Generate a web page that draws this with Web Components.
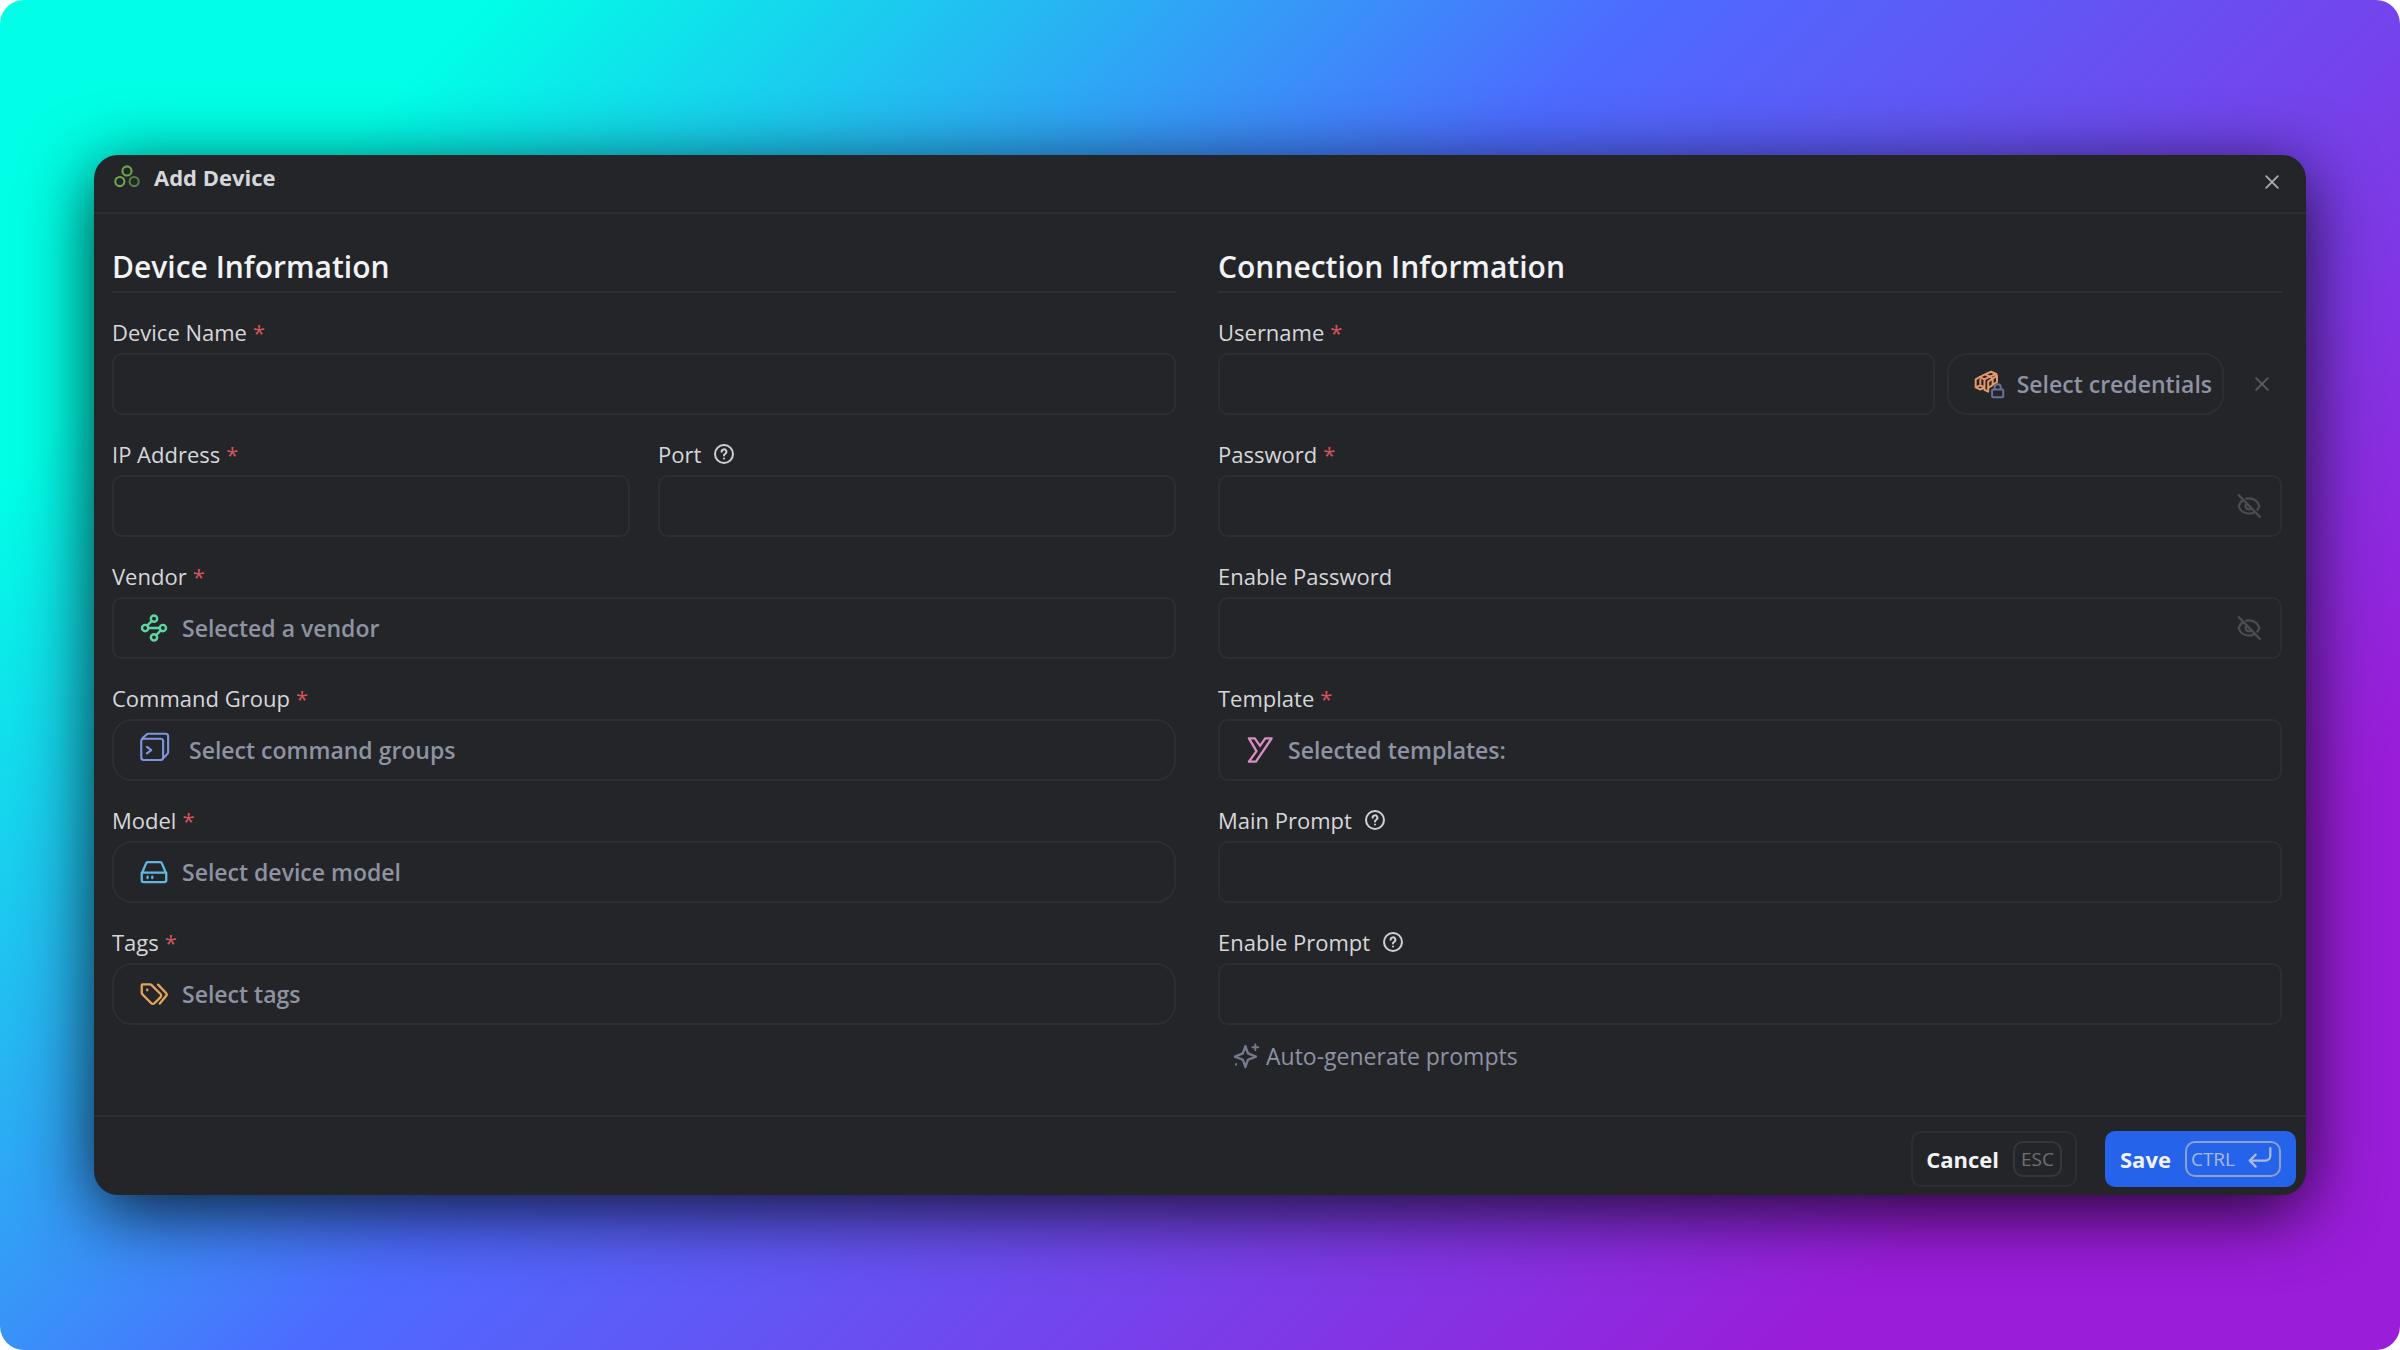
<!DOCTYPE html>
<html lang="en">
<head>
<meta charset="utf-8">
<title>Add Device</title>
<style>
  html { background: #fff; }
  body {
    margin: 0;
    font-family: 'Open Sans', 'Noto Sans', sans-serif;
    font-size: 22px;
    line-height: 30px;
    color: #d6d7da;
    --panel: #242529;
    --line: #2d2e32;
    --muted: #8d93a1;
  }
</style>
</head>
<body>

<app-stage>
  <app-dialog heading="Add Device">
    <form-section heading="Device Information">
      <text-field label="Device Name" required></text-field>
      <field-pair>
        <text-field label="IP Address" required></text-field>
        <text-field label="Port" help></text-field>
      </field-pair>
      <picker-field label="Vendor" icon="vendor" text="Selected a vendor" required></picker-field>
      <picker-field label="Command Group" icon="commands" text="Select command groups" round required></picker-field>
      <picker-field label="Model" icon="drive" text="Select device model" round required></picker-field>
      <picker-field label="Tags" icon="tags" text="Select tags" round required></picker-field>
    </form-section>
    <form-section heading="Connection Information">
      <text-field label="Username" required>
        <credentials-button slot="after"></credentials-button>
      </text-field>
      <text-field label="Password" type="password" required></text-field>
      <text-field label="Enable Password" type="password"></text-field>
      <picker-field label="Template" icon="template" text="Selected templates:" required></picker-field>
      <text-field label="Main Prompt" help></text-field>
      <text-field label="Enable Prompt" help></text-field>
      <generate-button slot="end">Auto-generate prompts</generate-button>
    </form-section>
    <action-button slot="footer" keys="ESC">Cancel</action-button>
    <action-button slot="footer" keys="CTRL" enter primary>Save</action-button>
  </app-dialog>
</app-stage>

<script>
  const svg = (size, stroke, body, color = 'currentColor') =>
    `<svg width="${size}" height="${size}" viewBox="0 0 24 24" fill="none" stroke="${color}" stroke-width="${stroke}" stroke-linecap="round" stroke-linejoin="round" aria-hidden="true">${body}</svg>`;

  const icons = {
    logo: svg(26, 1.9, '<circle cx="12" cy="6.4" r="4.2"/><circle cx="5.4" cy="16.2" r="4.2"/><circle cx="18.6" cy="16.2" r="4.2" opacity=".7"/>', '#6aa84f'),
    close: svg(20, 2.2, '<path d="M5 5l14 14M19 5L5 19"/>'),
    help: svg(22, 2.2, '<circle cx="12" cy="12" r="9.8"/><path d="M9.4 9.6a2.6 2.6 0 1 1 3.9 2.2c-.8.4-1.3.9-1.3 1.8M12 16.8v.2"/>'),
    vendor: svg(28, 2.1, '<circle cx="12" cy="4" r="2.7"/><circle cx="4.4" cy="12" r="2.7"/><circle cx="19.6" cy="12" r="2.7"/><circle cx="12" cy="20" r="2.7"/><path d="M7.1 12h9.8M6.2 10l4-4.2M13.8 18.2l4-4.2"/>', '#5fd6a2'),
    // wider than the others, so its text starts further in
    commands: `<svg width="35" height="30" viewBox="0 3 28 24" fill="none" stroke="#7b97dd" stroke-width="1.7" stroke-linecap="round" stroke-linejoin="round" overflow="visible" aria-hidden="true"><rect x="1" y="6" width="17.5" height="17" rx="2"/><path d="M2 5.6L5.2 2.6A2 2 0 0 1 6.6 2H20.5a2 2 0 0 1 2 2v12.6a2 2 0 0 1-.5 1.4l-3 3.2M5.5 12.5l3.5 2.6-3.5 2.6"/></svg>`,
    drive: svg(28, 2, '<path d="M1.5 13.5L5.2 4.6A1.6 1.6 0 0 1 6.7 3.5h10.6a1.6 1.6 0 0 1 1.5 1.1l3.7 8.9v5.6a1.6 1.6 0 0 1-1.6 1.6H3.1a1.6 1.6 0 0 1-1.6-1.6zM1.5 12.5h21M6.5 16v1.2M10.5 16v1.2"/>', '#62b7df'),
    tags: svg(28, 2, '<path d="M1.5 4.4v6.4c0 .6.2 1.1.6 1.5l7.6 7.6a1.9 1.9 0 0 0 2.7 0l5.2-5.2a1.9 1.9 0 0 0 0-2.7L10 4.4a2 2 0 0 0-1.5-.7H2.2a.7.7 0 0 0-.7.7zM6.2 8.2v.6M15.5 4l6.8 7.2a1.9 1.9 0 0 1 0 2.6L17 20.2"/>', '#e2a35c'),
    template: svg(28, 2, '<path d="M2.5 2h5l4.5 6.5L16.500 2h5.500L8.500 22h-6L9 13z"/>', '#d68fc0'),
    cubes: svg(32, 1.5, '<path stroke="#e5986c" d="M2 8.5l3-1.7 3.6 1.7v6L5.5 13 2 14.5zM2 8.5v6l3.3 1.6M8.6 8.5v7.8l2.8 1.4v-7.5M5 6.8l4-2 3.6 1.7-4 2M9 4.8l4.5-2 4 1.7-5 2M11.4 10.2l3.3-2.3v5l-3.3 2M14.7 7.9l3.3-2v4.6l-3.3 2.2M5.5 8.8V13M12.6 6.5l2.1 1.4M17.5 4.5l.5 1.4M5.3 16.1l3.3-1.4"/><g stroke="#6b7196"><rect x="14.3" y="16.2" width="8.4" height="5.8" rx=".8"/><path d="M16.2 16v-1.5a2.3 2.3 0 0 1 4.6 0V16"/></g>'),
    eyeOff: svg(26, 2.1, '<path d="M2.5 2l19.5 20M9.5 5.2A10.5 10.5 0 0 1 12 5c5 0 8.4 3.2 9.5 7-.4 1.3-1 2.4-1.8 3.4M6.3 6.7C4.4 8 3.1 9.9 2.5 12c1.1 3.8 4.5 7 9.5 7 1.6 0 3-.3 4.2-.9M9.8 9.8a3.1 3.1 0 0 0 4.4 4.4"/>'),
    sparkle: svg(28, 2, '<path d="M11.5 3.5l2.2 6.3 6.8 2.7-6.8 2.7-2.2 6.3-2.2-6.3-6.8-2.7 6.8-2.7z"/><path stroke-width="1.6" d="M20 2v5M17.5 4.5h5M3.5 18.8v.8"/>', '#747b8b'),
    enter: svg(26, 2.1, '<path d="M21.5 2v7a4.5 4.5 0 0 1-4.5 4.5H2.5M8 8l-5.5 5.5L8 19"/>')
  };

  // Sets the shadow markup once, from the class's own render()
  class BaseElement extends HTMLElement {
    constructor() {
      super();
      this.attachShadow({ mode: 'open' });
      this.shadowRoot.innerHTML = `<style>* { box-sizing: border-box; } svg { display: block; flex: none; }</style>${this.render()}`;
    }
    attr(name) {
      return this.getAttribute(name) || '';
    }
  }

  const labelStyles = `
    :host { display: block; min-width: 0; }
    .label { display: flex; align-items: center; gap: 6px; height: 30px; margin-bottom: 6px; }
    .star { color: #d4565a; }
    .help { background: none; border: 0; padding: 0; margin-left: 6px; color: #cfd0d4; }
  `;

  const labelRow = (el, id) => `
    <div class="label">
      <label for="${id}">${el.attr('label')}</label>
      ${el.hasAttribute('required') ? '<span class="star">*</span>' : ''}
      ${el.hasAttribute('help') ? `<button class="help" type="button" aria-label="Help">${icons.help}</button>` : ''}
    </div>`;

  customElements.define('app-stage', class extends BaseElement {
    render() {
      return /*html*/ `
      <style>
        :host {
          display: flex;
          align-items: center;
          box-sizing: border-box;
          min-height: 100vh;
          padding: 80px 94px;
          border-radius: 24px;
          background: linear-gradient(135deg, #00ffe6 13%, #4d6bff 44%, #9a1dd9 84%);
        }
        ::slotted(*) { flex: 1; }
      </style>
      <slot></slot>`;
    }
  });

  customElements.define('app-dialog', class extends BaseElement {
    render() {
      return /*html*/ `
      <style>
        :host {
          display: block;
          min-width: 0;
          border-radius: 24px;
          background: var(--panel);
          box-shadow: 0 16px 70px rgba(0, 0, 0, 0.8);
        }
        header {
          display: flex;
          align-items: center;
          justify-content: space-between;
          height: 59px;
          padding: 0 24px 0 20px;
          border-bottom: 2px solid var(--line);
        }
        h1 { display: flex; align-items: center; gap: 14px; margin: 0; padding-bottom: 14px; font-size: 22px; font-weight: 700; }
        header button { display: flex; padding: 0 0 4px; border: 0; background: none; color: #a9abb0; }
        main { display: grid; grid-template-columns: 1fr 1fr; gap: 42px; padding: 35px 24px 42px 18px; }
        footer {
          display: flex;
          justify-content: flex-end;
          gap: 28px;
          padding: 14px 10px 8px;
          border-top: 2px solid var(--line);
        }
      </style>
      <header>
        <h1>${icons.logo}${this.attr('heading')}</h1>
        <button type="button" aria-label="Close">${icons.close}</button>
      </header>
      <main><slot></slot></main>
      <footer><slot name="footer"></slot></footer>`;
    }
  });

  customElements.define('form-section', class extends BaseElement {
    render() {
      return /*html*/ `
      <style>
        :host { display: block; min-width: 0; }
        h2 {
          margin: 0 0 24px;
          padding-bottom: 6px;
          border-bottom: 2px solid var(--line);
          color: #f1f2f4;
          font-size: 30px;
          font-weight: 600;
          line-height: 36px;
        }
        .fields { display: grid; gap: 24px; }
      </style>
      <h2>${this.attr('heading')}</h2>
      <div class="fields"><slot></slot></div>
      <slot name="end"></slot>`;
    }
  });

  customElements.define('field-pair', class extends BaseElement {
    render() {
      return /*html*/ `
      <style>:host { display: grid; grid-template-columns: 1fr 1fr; gap: 28px; }</style>
      <slot></slot>`;
    }
  });

  customElements.define('text-field', class extends BaseElement {
    render() {
      const secret = this.attr('type') === 'password';
      return /*html*/ `
      <style>
        ${labelStyles}
        .row { display: flex; align-items: center; }
        .box {
          display: flex;
          align-items: center;
          flex: 1;
          min-width: 0;
          height: 62px;
          padding-right: 18px;
          border: 2px solid var(--line);
          border-radius: 10px;
        }
        input { flex: 1; min-width: 0; height: 100%; padding: 0 16px; border: 0; outline: 0; background: none; color: inherit; font: inherit; }
        .box button { padding: 0; border: 0; background: none; color: #4b4d52; }
      </style>
      ${labelRow(this, 'control')}
      <div class="row">
        <div class="box">
          <input id="control" type="${secret ? 'password' : 'text'}">
          ${secret ? `<button type="button" aria-label="Show password">${icons.eyeOff}</button>` : ''}
        </div>
        <slot name="after"></slot>
      </div>`;
    }
  });

  customElements.define('picker-field', class extends BaseElement {
    render() {
      return /*html*/ `
      <style>
        ${labelStyles}
        #control {
          display: flex;
          align-items: center;
          gap: 14px;
          width: 100%;
          height: 62px;
          padding: 0 26px;
          border: 2px solid var(--line);
          border-radius: 10px;
          background: none;
          color: var(--muted);
          font: inherit;
          font-size: 23px;
          font-weight: 600;
        }
        :host([round]) #control { border-radius: 20px; }
      </style>
      ${labelRow(this, 'control')}
      <button id="control" type="button">${icons[this.attr('icon')]}${this.attr('text')}</button>`;
    }
  });

  customElements.define('credentials-button', class extends BaseElement {
    render() {
      return /*html*/ `
      <style>
        :host { display: flex; align-items: center; }
        button { padding: 0; border: 0; background: none; color: #5b5d63; font: inherit; }
        .select {
          display: flex;
          align-items: center;
          gap: 12px;
          height: 62px;
          margin-left: 12px;
          padding: 0 10px 0 24px;
          border: 2px solid var(--line);
          border-radius: 20px;
          color: var(--muted);
          font-size: 23px;
          font-weight: 600;
        }
        .clear { margin: 0 10px 0 28px; }
      </style>
      <button class="select" type="button">${icons.cubes}Select credentials</button>
      <button class="clear" type="button" aria-label="Clear credentials">${icons.close}</button>`;
    }
  });

  customElements.define('generate-button', class extends BaseElement {
    render() {
      return /*html*/ `
      <style>
        :host { display: flex; margin-top: 16px; padding-bottom: 2px; }
        button {
          display: flex;
          align-items: center;
          gap: 6px;
          height: 30px;
          padding: 0 14px;
          border: 0;
          background: none;
          color: var(--muted);
          font: inherit;
          font-size: 23px;
        }
      </style>
      <button type="button">${icons.sparkle}<slot></slot></button>`;
    }
  });

  customElements.define('action-button', class extends BaseElement {
    render() {
      return /*html*/ `
      <style>
        :host { display: block; }
        button {
          display: flex;
          align-items: center;
          gap: 14px;
          height: 56px;
          padding: 0 13px;
          border: 2px solid var(--line);
          border-radius: 10px;
          background: none;
          color: #f1f2f4;
          font: inherit;
          font-weight: 700;
        }
        kbd {
          display: flex;
          align-items: center;
          gap: 12px;
          height: 36px;
          padding: 0 6px;
          border: 2px solid #36373b;
          border-radius: 10px;
          color: #6e7075;
          font-family: inherit;
          font-size: 19px;
          font-weight: 400;
        }
        :host([primary]) button { border-color: #2563eb; background: #2563eb; }
        :host([primary]) kbd { padding: 0 6px 0 4px; border-color: #8e9fca; color: #a9b9e6; }
      </style>
      <button type="button"><slot></slot><kbd>${this.attr('keys')}${this.hasAttribute('enter') ? icons.enter : ''}</kbd></button>`;
    }
  });
</script>
</body>
</html>
